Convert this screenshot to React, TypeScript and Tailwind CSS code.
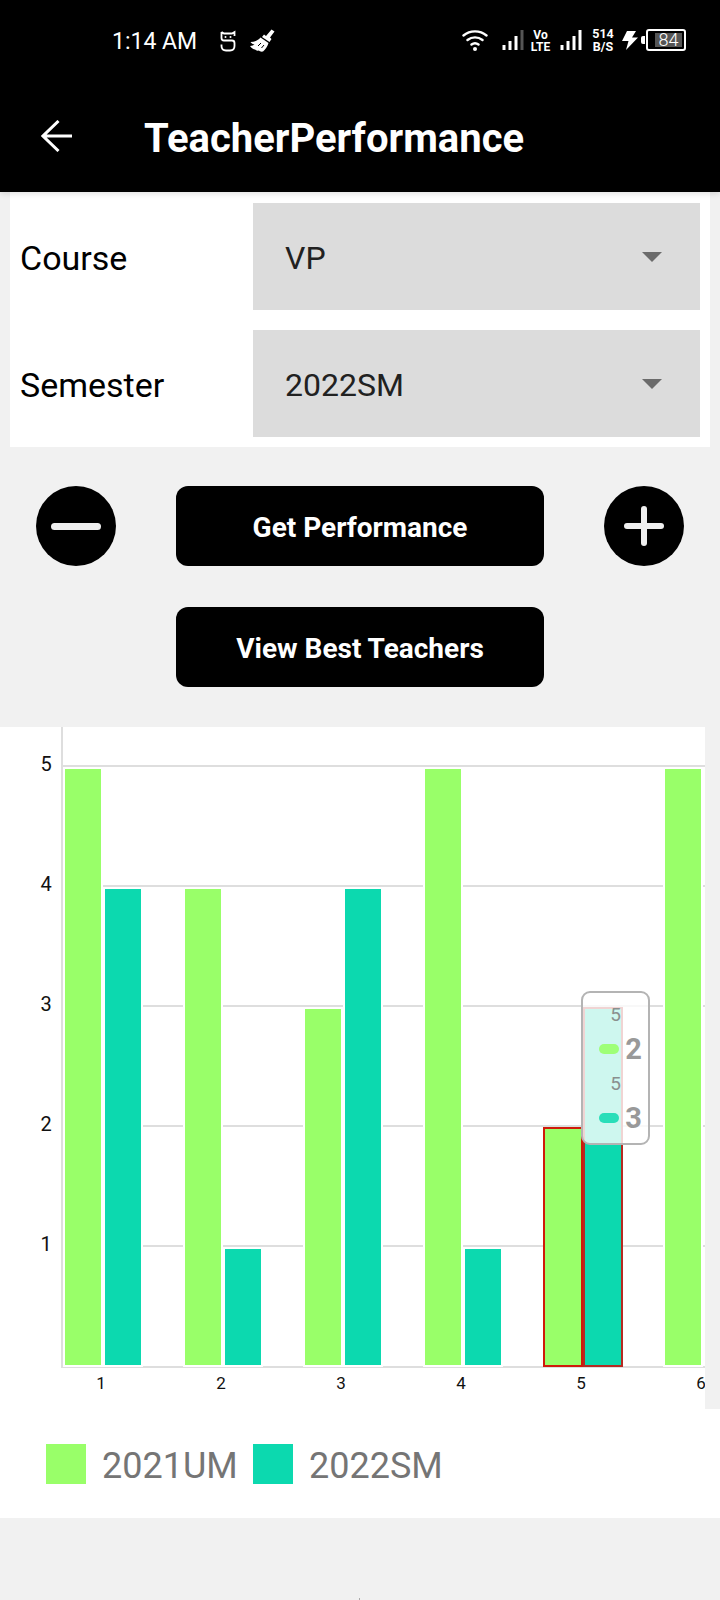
const A = [5, 4, 3, 5, 2, 5];
const B = [4, 1, 4, 1, 3, 0];
const GREEN = "#99ff69";
const TEAL = "#0cd9af";
const topOf = (v: number) => 769 + (5 - v) * 120;

function Bars({ dim, levels }: { dim: string; levels: number[] }) {
  return (
    <svg width="22" height="22" viewBox="0 0 22 22">
      {levels.map((h, i) => (
        <rect key={i} x={i * 6 + 0.5} y={21 - h} width="3" height={h} fill={i === 3 ? dim : "#fff"} />
      ))}
    </svg>
  );
}

function StatusBar() {
  return (
    <div className="flex h-[82px] items-start bg-black pl-[112px] pt-[28px] text-white font-['Roboto',sans-serif]">
      <span className="mr-[20px] mt-[1px] w-[88px] whitespace-nowrap text-[23px] leading-[26px]">1:14 AM</span>
      <svg className="mr-[14px] mt-[2px]" width="16" height="22" viewBox="0 0 16 22" fill="none" stroke="#fff" strokeWidth="1.800">
        <path d="M1.500 2L4 3.500H12L14.500 2V6M1.500 2V8Q1.500 10.500 4 10.500H12Q14.500 10.500 14.500 13V16Q14.500 20.500 10 20.500H6Q1.500 20.500 1.500 16V14.500" />
        <circle cx="5.500" cy="7" r="1" fill="#fff" stroke="none" />
        <circle cx="10.500" cy="7" r="1" fill="#fff" stroke="none" />
      </svg>
      <svg className="mr-[187px] mt-[1px]" width="25" height="23" viewBox="0 0 25 23">
        <path d="M21.500 0.500L24.500 2.500 20 8.500 21.500 10 19.500 13 12 8 14 5.500 16 7z" fill="#fff" />
        <path d="M10.500 8.500L18.500 14C17.500 17.500 15.500 20.500 13 22.500 11 23 9.500 22 8.500 21.500 7 22 6 21.500 5 20.500 3.500 20.500 1.500 19 0 17 2 16.500 3.500 16.500 4.500 15.500 3 15.500 1.500 14.500 0.500 13 4.500 13 8 11.500 10.500 8.500Z" fill="#fff" />
        <path d="M8 17L11 14M11.500 19L14 16" stroke="#000" strokeWidth="1" />
      </svg>
      <svg className="mr-[14px]" width="26" height="24" viewBox="0 0 26 24" fill="none" stroke="#fff" strokeWidth="2.400" strokeLinecap="round">
        <path d="M1.500 7.500C8 2 18 2 24.500 7.500M5.500 12C10 8.500 16 8.500 20.500 12M9.500 16.500C11.500 15 14.500 15 16.500 16.500" />
        <circle cx="13" cy="21" r="2" fill="#fff" stroke="none" />
      </svg>
      <div className="mr-[6px] mt-[1px]"><Bars dim="#555" levels={[5, 9, 14, 20]} /></div>
      <div className="mr-[9px] mt-[1px] w-[21px] text-center text-[12px] font-bold leading-[12px]">
        <div>Vo</div>
        <div>LTE</div>
      </div>
      <div className="mr-[9px] mt-[1px]"><Bars dim="#fff" levels={[5, 9, 14, 20]} /></div>
      <div className="mr-[6px] w-[24px] text-center text-[12.500px] font-bold leading-[12.500px]">
        <div>514</div>
        <div>B/S</div>
      </div>
      <svg className="mr-[3px] mt-[3px]" width="17" height="19" viewBox="0 0 17 19" fill="#fff">
        <path d="M6 0H15L11 6.500H17L5 19 7.500 10H1z" />
      </svg>
      <div className="mt-[8px] h-[8px] w-[4px] rounded-l-[2px] bg-white" />
      <div className="ml-[1px] mt-[1px] flex h-[22px] w-[40px] items-center rounded-[3px] border-2 border-white pl-[7px]">
        <div className="h-[14px] w-[27px] bg-[#555] text-center text-[18px] font-light leading-[14px]">84</div>
      </div>
    </div>
  );
}

function AppBar() {
  return (
    <div className="relative z-10 flex h-[110px] items-center bg-black pl-[41px] shadow-[0_2px_6px_rgba(0,0,0,0.12)]">
      <svg width="31" height="32" viewBox="0 0 31 32" fill="none" stroke="#fff" strokeWidth="3" className="mb-[2px]">
        <path d="M31 16H2M17.500 1L2 16 17.500 31" />
      </svg>
      <div className="ml-[72px] pt-[3px] text-[40px] font-bold leading-[46px] text-white">TeacherPerformance</div>
    </div>
  );
}

function Row({ label, value }: { label: string; value: string }) {
  return (
    <div className="flex h-[107px] items-center">
      <div className="w-[243px] pl-[10px] pt-[4px] text-[34px] text-black">{label}</div>
      <div className="flex h-full w-[447px] items-center justify-between bg-[#dcdcdc] pl-[32px] pr-[38px]">
        <span className="pt-[2px] text-[32px] text-[#212121]">{value}</span>
        <svg width="20" height="10" viewBox="0 0 20 10" className="mt-[1px]"><path d="M0 0h20L10 10z" fill="#6b6b6b" /></svg>
      </div>
    </div>
  );
}

function TipRow({ pill, value }: { pill: string; value: string }) {
  return (
    <div className="flex h-[69px] w-[50px] flex-col">
      <div className="h-[22px] w-[29px] text-right text-[19px] leading-[20px] text-[#8a8f8e]">5</div>
      <div className="flex items-center justify-between pt-[4px]">
        <div className={pill} />
        <div className="mt-[1px] text-[29px] font-bold leading-[34px] text-[#999]">{value}</div>
      </div>
    </div>
  );
}

function Chart() {
  const h = 682;
  const y = (v: number) => v - 727;
  const gridYs = [766, 886, 1006, 1126, 1246];
  return (
    <div className="relative h-[682px] w-[705px] overflow-hidden bg-white">
      <svg width="705" height={h} viewBox={`0 0 705 ${h}`} className="block">
        {gridYs.map((g) => (
          <rect key={g} x="63" y={y(g) - 1} width="642" height="2" fill="#dedede" />
        ))}
        <rect x="61" y="0" width="2" height={y(1368)} fill="#dedede" />
        <rect x="61" y={y(1366)} width="644" height="2" fill="#dedede" />
        {[5, 4, 3, 2, 1].map((v, i) => (
          <text key={v} x="46" y={y(771 + i * 120)} fontSize="20" fill="#111" textAnchor="middle" fontFamily="Roboto, sans-serif">{v}</text>
        ))}
        {[1, 2, 3, 4, 5, 6].map((v, i) => (
          <text key={v} x={101 + i * 120} y={y(1389)} fontSize="17" fill="#111" textAnchor="middle" fontFamily="Roboto, sans-serif">{v}</text>
        ))}
        {A.map((v, i) => {
          const sel = i === 4;
          const b = B[i];
          const ax = 65 + i * 120;
          return (
            <g key={i}>
              {b > 0 && (
                <rect x={ax + 39} y={y(topOf(b) - 1)} width="38" height={1365 - topOf(b) + 2} fill={TEAL} stroke={sel ? "#b52a22" : "#fff"} strokeWidth="2" />
              )}
              <rect x={ax - 1} y={y(topOf(v) - 1)} width="38" height={1365 - topOf(v) + 2} fill={GREEN} stroke={sel ? "#d01a0a" : "#fff"} strokeWidth="2" />
            </g>
          );
        })}
      </svg>
      <div className="absolute left-[581px] top-[264px] flex h-[154px] w-[69px] flex-col items-center rounded-[9px] border-2 border-[#b4b4b4] bg-white/80 pl-[3px] pt-[12px]">
        <TipRow pill="ml-[7px] h-[10px] w-[20px] rounded-[5px] bg-[#99ff69]/90" value="2" />
        <TipRow pill="ml-[7px] h-[10px] w-[20px] rounded-[5px] bg-[#0cd9af]/85" value="3" />
      </div>
    </div>
  );
}

function Legend() {
  return (
    <div className="flex h-[109px] items-start bg-white pl-[46px] pt-[35px] text-[#757575]">
      <div className="h-[40px] w-[40px] bg-[#99ff69]" />
      <span className="ml-[16px] mt-[1px] w-[151px] text-[36px] leading-[42px]">2021UM</span>
      <div className="h-[40px] w-[40px] bg-[#0cd9af]" />
      <span className="ml-[16px] mt-[1px] text-[36px] leading-[42px]">2022SM</span>
    </div>
  );
}

export default function App() {
  return (
    <div className="relative h-[1600px] w-[720px] overflow-hidden bg-[#f1f1f1] font-['Roboto',sans-serif]">
      <StatusBar />
      <AppBar />
      <div className="mx-[10px] flex h-[255px] w-[700px] flex-col gap-[20px] bg-white pt-[11px]">
        <Row label="Course" value="VP" />
        <Row label="Semester" value="2022SM" />
      </div>
      <div className="mt-[39px] flex h-[80px] items-center justify-between px-[36px]">
        <button className="flex h-[80px] w-[80px] items-center justify-center rounded-full bg-black">
          <svg width="50" height="7" viewBox="0 0 50 7"><rect width="50" height="7" rx="3.500" fill="#f0f0f0" /></svg>
        </button>
        <button className="h-[80px] w-[368px] rounded-[12px] bg-black pt-[3px] text-[28px] font-bold text-white">Get Performance</button>
        <button className="flex h-[80px] w-[80px] items-center justify-center rounded-full bg-black">
          <svg width="40" height="40" viewBox="0 0 40 40" fill="#f0f0f0">
            <rect y="17" width="40" height="6" rx="3" />
            <rect x="17" width="6" height="40" rx="3" />
          </svg>
        </button>
      </div>
      <div className="mt-[41px] flex justify-center">
        <button className="h-[80px] w-[368px] rounded-[12px] bg-black pt-[3px] text-[28px] font-bold text-white">View Best Teachers</button>
      </div>
      <div className="mt-[40px]"><Chart /></div>
      <Legend />
      <div className="absolute bottom-0 left-[359px] h-[2px] w-[1px] bg-[#aaaaaa]" />
    </div>
  );
}
